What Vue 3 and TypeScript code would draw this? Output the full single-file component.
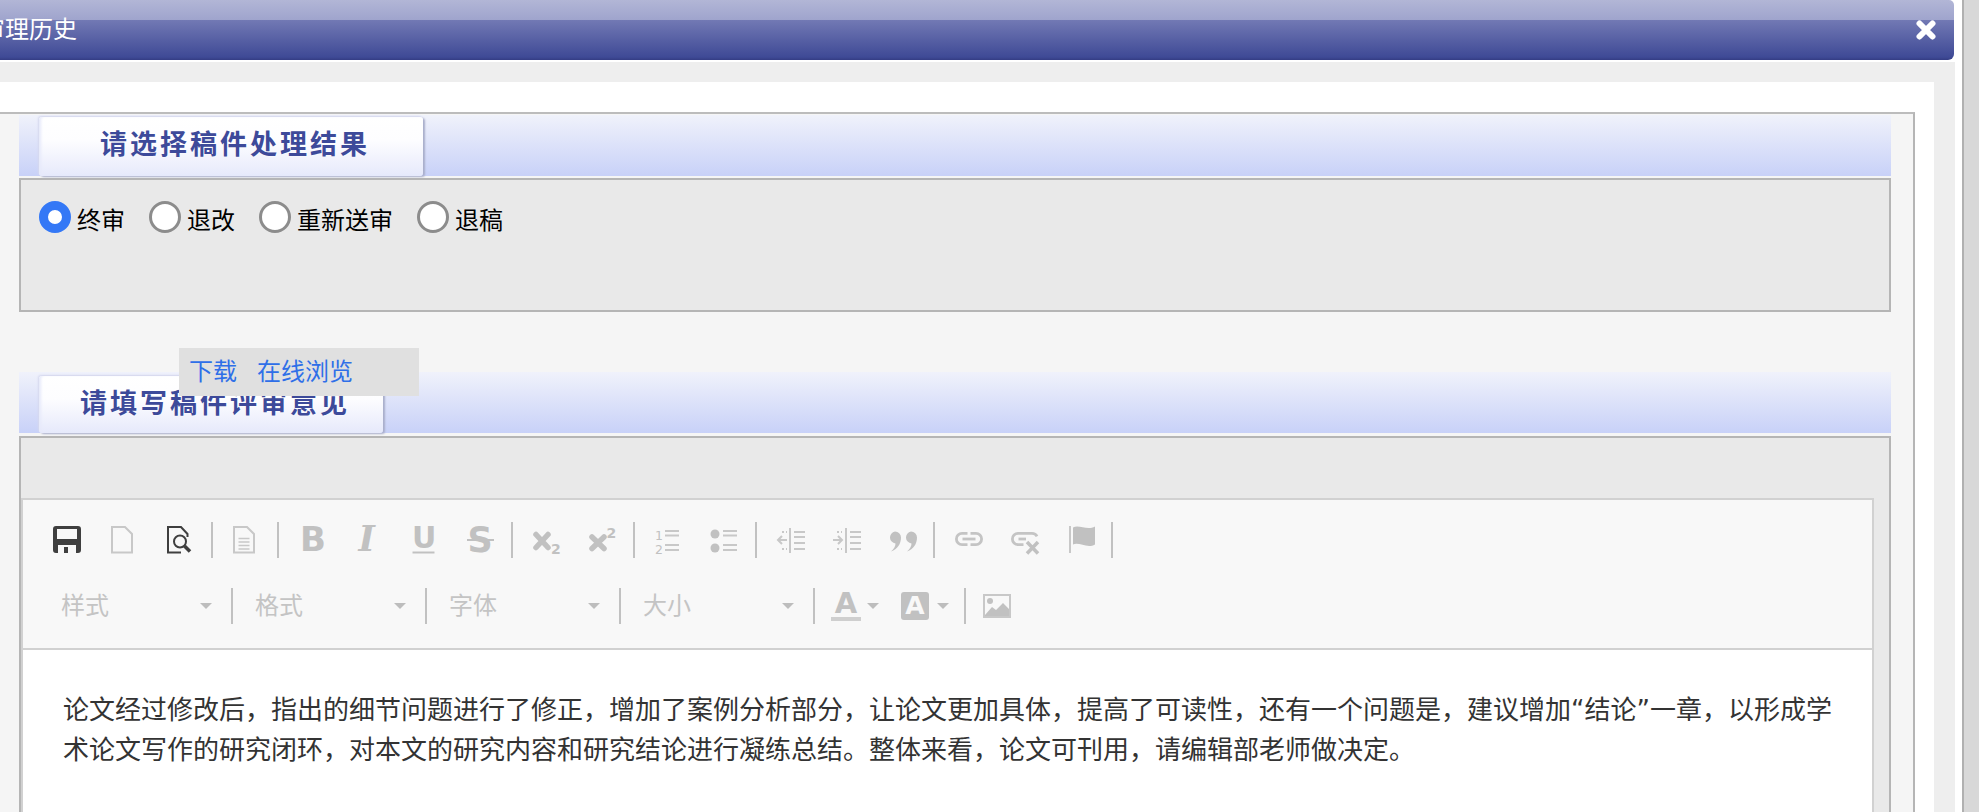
<script setup lang="ts">
const radios = [
  { label: '终审', checked: true },
  { label: '退改', checked: false },
  { label: '重新送审', checked: false },
  { label: '退稿', checked: false },
]
const combos = ['样式', '格式', '字体', '大小']
</script>

<template>
  <div class="page">
    <main class="dialog">
      <header class="titlebar">
        <span class="titlebar-text">审理历史</span>
        <svg class="close" viewBox="0 0 20 20" aria-label="关闭">
          <path d="M3.5 3.5 16.5 16.5M16.5 3.5 3.5 16.5" />
        </svg>
      </header>
      <div class="dialog-body">
        <div class="sheet">
          <div class="frame">
            <section class="section">
              <div class="section-head">
                <h2 class="tab tab-result">请选择稿件处理结果</h2>
              </div>
              <div class="panel panel-radio">
                <label v-for="r in radios" :key="r.label" class="radio">
                  <input type="radio" name="result" :checked="r.checked" />
                  <span>{{ r.label }}</span>
                </label>
              </div>
            </section>

            <section class="section section-review">
              <div class="popup">
                <a>下载</a>
                <a>在线浏览</a>
              </div>
              <div class="section-head">
                <h2 class="tab tab-review">请填写稿件评审意见</h2>
              </div>
              <div class="panel panel-editor">
                <div class="editor">
                  <div class="toolbar">
                    <div class="row row-top">
                      <div class="group">
                        <svg class="ico" viewBox="0 0 28 28"><path class="dark" fill-rule="evenodd" d="M3 0H25a3 3 0 0 1 3 3V24a3 3 0 0 1-3 3H3a3 3 0 0 1-3-3V3a3 3 0 0 1 3-3ZM4 3V13H24V3ZM5 19V27H11V21H15V27H23V19Z" /></svg>
                        <svg class="ico" viewBox="0 0 28 28"><path class="line" d="M3 1H16L23 8V26.5H3Z" /></svg>
                        <svg class="ico" viewBox="0 0 28 28">
                          <path class="line-dark" d="M16 26.5H3V1H16L22.500 8V11" />
                          <circle class="line-dark" cx="15" cy="15.500" r="6" />
                          <path class="line-dark thick" d="M19.500 20 25 25.500" />
                        </svg>
                      </div>
                      <i class="sep sep-a"></i>
                      <div class="group">
                        <svg class="ico" viewBox="0 0 28 28">
                          <path class="line" d="M1 1H14L21 8V26.500H1Z" />
                          <path class="line thin" d="M5.500 12.500H16.500M5.500 16H16.500M5.500 19.500H16.500M5.500 23H16.500" />
                        </svg>
                      </div>
                      <i class="sep sep-b"></i>
                      <div class="group">
                        <svg class="ico" viewBox="0 0 28 28"><text class="glyph" x="1" y="25" font-size="34" font-weight="700">B</text></svg>
                        <svg class="ico" viewBox="0 0 28 28"><text class="glyph serif" x="3.500" y="25" font-size="35" font-weight="700" font-style="italic">I</text></svg>
                        <svg class="ico" viewBox="0 0 28 28">
                          <text class="glyph" x="1" y="22" font-size="30" font-weight="700">U</text>
                          <rect class="solid" x="1.500" y="25.500" width="22" height="2" />
                        </svg>
                        <svg class="ico" viewBox="0 0 28 28">
                          <text class="glyph" x="0.500" y="25.500" font-size="35" font-weight="700">S</text>
                          <rect class="solid" x="0" y="13" width="27" height="2" />
                        </svg>
                      </div>
                      <i class="sep sep-b"></i>
                      <div class="group">
                        <svg class="ico" viewBox="0 0 28 28">
                          <path class="stroke-x" d="M3 8.500 15 21.500M15 8.500 3 21.500" />
                          <text class="glyph" x="18" y="28" font-size="14" font-weight="700">2</text>
                        </svg>
                        <svg class="ico" viewBox="0 0 28 28">
                          <path class="stroke-x" d="M3 11 15 22.500M15 11 3 22.500" />
                          <text class="glyph" x="17.500" y="12" font-size="14" font-weight="700">2</text>
                        </svg>
                      </div>
                      <i class="sep sep-b"></i>
                      <div class="group">
                        <svg class="ico" viewBox="0 0 28 28">
                          <text class="glyph" x="0" y="13.500" font-size="12.500">1</text>
                          <text class="glyph" x="0" y="27.500" font-size="12.500">2</text>
                          <path class="line" d="M10 5H24M10 9.500H24M10 19H24M10 24H24" />
                        </svg>
                        <svg class="ico" viewBox="0 0 28 28">
                          <circle class="solid" cx="4" cy="8" r="4.500" />
                          <circle class="solid" cx="4" cy="22" r="4.500" />
                          <path class="line" d="M12 5H26M12 9.500H26M12 19H26M12 24H26" />
                        </svg>
                      </div>
                      <i class="sep sep-b"></i>
                      <div class="group">
                        <svg class="ico" viewBox="0 0 28 28">
                          <path class="line" d="M13 2V27M17 6H28M17 11H28M17 17H28M17 23H28" />
                          <path class="line" d="M1 14H10M5 10 1 14 5 18" />
                          <path class="line dots" d="M5 6H10M5 23H10" />
                        </svg>
                        <svg class="ico" viewBox="0 0 28 28">
                          <path class="line" d="M13 2V27M17 6H28M17 11H28M17 17H28M17 23H28" />
                          <path class="line" d="M0 14H9M5 10 9 14 5 18" />
                          <path class="line dots" d="M4 6H9M4 23H9" />
                        </svg>
                        <svg class="ico" viewBox="0 0 28 28">
                          <path class="solid" d="M6 5.500a6 6 0 0 1 6 6C12 18 8.500 23 2 25.500 5 22.500 6.500 20 6.500 17.400A6 6 0 0 1 6 5.500Z" />
                          <path class="solid" d="M22 5.500a6 6 0 0 1 6 6C28 18 24.500 23 18 25.500 21 22.500 22.500 20 22.500 17.400A6 6 0 0 1 22 5.500Z" />
                        </svg>
                      </div>
                      <i class="sep sep-b"></i>
                      <div class="group">
                        <svg class="ico" viewBox="0 0 28 28">
                          <path class="line wide" d="M12.500 7.400H7a5.600 5.600 0 0 0 0 11.200H12.500M15.500 7.400H21a5.600 5.600 0 0 1 0 11.200H15.500" />
                          <path class="line wide" d="M7.500 13H20.500" />
                        </svg>
                        <svg class="ico" viewBox="0 0 28 28">
                          <path class="line wide" d="M12.500 18.600H7a5.600 5.600 0 0 1 0-11.200H21a5.600 5.600 0 0 1 5 3" />
                          <path class="line wide" d="M7.500 13H15" />
                          <path class="stroke-x small" d="M16 16 27 27.500M27 16 16 27.500" />
                        </svg>
                        <svg class="ico" viewBox="0 0 28 28">
                          <path class="line" d="M3 0V27" />
                          <path class="solid" d="M6 1.500C12-2 20 5 28 .5V18.500C20 23 12 15.500 6 18.500Z" />
                        </svg>
                      </div>
                      <i class="sep sep-b"></i>
                    </div>
                    <div class="row row-bottom">
                      <template v-for="(c, i) in combos" :key="c">
                        <div class="combo"><span>{{ c }}</span><b class="caret"></b></div>
                        <i class="sep" :class="i === 3 ? 'sep-last' : 'sep-c'"></i>
                      </template>
                      <div class="color-btn">
                        <span class="a-text">A</span>
                        <b class="caret"></b>
                      </div>
                      <div class="color-btn color-bg">
                        <span class="a-box">A</span>
                        <b class="caret"></b>
                      </div>
                      <i class="sep sep-d"></i>
                      <svg class="ico" viewBox="0 0 28 28">
                        <rect class="line" x="1" y="3" width="26" height="22" />
                        <circle class="solid" cx="7" cy="9" r="3" />
                        <path class="solid" d="M2 23 9 15 13 18 20 11 26 17V24H2Z" />
                      </svg>
                    </div>
                  </div>
                  <div class="editor-body">
                    <p>论文经过修改后，指出的细节问题进行了修正，增加了案例分析部分，让论文更加具体，提高了可读性，还有一个问题是，建议增加“结论”一章，以形成学术论文写作的研究闭环，对本文的研究内容和研究结论进行凝练总结。整体来看，论文可刊用，请编辑部老师做决定。</p>
                  </div>
                </div>
              </div>
            </section>
          </div>
        </div>
      </div>
    </main>
    <aside class="scroll-rail"></aside>
  </div>
</template>

<style scoped>
.page {
  display: flex;
  width: 1979px;
  height: 812px;
  overflow: hidden;
  background: #fff;
  font-family: "Noto Sans CJK SC", "Liberation Sans", sans-serif;
}
.dialog {
  width: 1955px;
  margin-right: 7px;
  flex: none;
  display: flex;
  flex-direction: column;
}
.scroll-rail {
  flex: 1;
  background: #d8d8d8;
  border-left: 2px solid #b0b0b0;
}
.titlebar {
  height: 60px;
  margin-right: 1px;
  margin-bottom: 2px;
  flex: none;
  display: flex;
  align-items: center;
  justify-content: space-between;
  padding-right: 18px;
  box-sizing: border-box;
  color: #fff;
  border-radius: 0 5px 6px 0;
  background: linear-gradient(#b2b6d6 0, #9fa4cd 20px, #7279b4 20px, #3f4a96 57px, #343d84 60px);
}
.titlebar-text {
  margin-left: -19px;
  padding-bottom: 5px;
  font-size: 24px;
  line-height: 1;
}
.close {
  width: 20px;
  height: 20px;
}
.close path {
  fill: none;
  stroke: #fff;
  stroke-width: 6;
  stroke-linecap: round;
}
.dialog-body {
  flex: 1;
  min-height: 0;
  background: #eee;
  padding: 20px 21px 0 0;
}
.sheet {
  height: 100%;
  box-sizing: border-box;
  background: #fff;
  padding: 30px 19px 0 0;
}
.frame {
  height: 100%;
  box-sizing: border-box;
  background: #f5f5f5;
  border-top: 2px solid #bcbcbc;
  border-right: 2px solid #b5b5b5;
  padding: 1px 22px 0 19px;
}
.section-review {
  margin-top: 60px;
  position: relative;
}
.section-head {
  height: 61px;
  background: linear-gradient(#f0f2fb, #c8d1f8);
  display: flex;
  align-items: flex-end;
  padding-left: 20px;
}
.tab {
  margin: 0;
  box-sizing: border-box;
  display: flex;
  align-items: center;
  font-size: 27px;
  letter-spacing: 3px;
  font-weight: 700;
  color: #3d4a9a;
  background: linear-gradient(#fff, #fdfdff 40%, #e6e9fb);
  border-radius: 3px;
  box-shadow: inset 3px 0 3px -1px #e6e9fa, 2px 1px 2px #a9aecb, -1px -1px 2px #d5d8ee;
  text-shadow: 0 0 2px #fff;
  white-space: nowrap;
}
.tab-result {
  width: 384px;
  height: 59px;
  padding: 0 0 8px 61px;
}
.tab-review {
  width: 344px;
  height: 57px;
  padding: 0 0 6px 41px;
}
.panel {
  margin-top: 2px;
  background: #e9e9e9;
  border: 2px solid #b5b5b5;
}
.panel-radio {
  height: 134px;
  box-sizing: border-box;
  display: flex;
  align-items: flex-start;
  gap: 24px;
  padding: 21px 0 0 18px;
}
.radio {
  display: flex;
  align-items: center;
  gap: 6px;
  height: 32px;
  font-size: 24px;
  color: #000;
}
.radio span {
  position: relative;
  top: 2px;
  line-height: 1;
}
.radio input {
  appearance: none;
  margin: 0;
  width: 32px;
  height: 32px;
  box-sizing: border-box;
  border-radius: 50%;
  background: #fff;
  border: 3px solid #8c8c8c;
}
.radio input:checked {
  border: 9px solid #3478f6;
}
.popup {
  position: absolute;
  left: 160px;
  top: -24px;
  z-index: 2;
  width: 240px;
  height: 48px;
  box-sizing: border-box;
  padding: 0 0 5px 10px;
  display: flex;
  align-items: center;
  gap: 20px;
  background: #e0e0e0;
  font-size: 24px;
  color: #2f6fe8;
}
.panel-editor {
  margin-top: 3px;
  padding: 60px 15px 0 0;
  height: 400px;
  box-sizing: border-box;
  border-bottom: 0;
  border-right-width: 2px;
}
.editor {
  border: 2px solid #d1d1d1;
  border-bottom: 0;
  background: #fff;
  height: 100%;
}
.toolbar {
  height: 150px;
  box-sizing: border-box;
  background: #f8f8f8;
  border-bottom: 2px solid #d1d1d1;
  padding-top: 22px;
}
.row {
  height: 36px;
  display: flex;
  align-items: center;
}
.row-top {
  padding-left: 30px;
}
.row-bottom {
  margin-top: 30px;
  padding-left: 38px;
}
.group {
  display: flex;
  gap: 28px;
  align-items: center;
}
.ico {
  width: 28px;
  height: 28px;
  flex: none;
  display: block;
  overflow: visible;
}
.dark { fill: #3f3f3f; }
.solid { fill: #c1c1c1; }
.line {
  fill: none;
  stroke: #c8c8c8;
  stroke-width: 2;
}
.line.thin { stroke-width: 1.6; }
.line.wide { stroke-width: 2.8; stroke: #c4c4c4; }
.line.dots { stroke-dasharray: 2 2; }
.line-dark {
  fill: none;
  stroke: #3f3f3f;
  stroke-width: 2;
}
.line-dark.thick { stroke-width: 3.5; }
.stroke-x {
  fill: none;
  stroke: #c1c1c1;
  stroke-width: 5.500;
  stroke-linecap: round;
}
.stroke-x.small { stroke-width: 3.5; stroke-linecap: butt; }
.glyph {
  fill: #c1c1c1;
  font-family: "DejaVu Sans", sans-serif;
}
.glyph.serif {
  font-family: "DejaVu Serif", serif;
}
.sep {
  display: block;
  flex: none;
  width: 2px;
  height: 36px;
  background: #c1c1c1;
}
.sep-a { margin: 0 20px 0 18px; }
.sep-b { margin: 0 20px 0 16px; }
.sep-c { margin: 0 22px 0 19px; }
.sep-last { margin: 0 16px 0 19px; }
.sep-d { margin: 0 17px 0 15px; }
.combo {
  width: 151px;
  flex: none;
  display: flex;
  align-items: center;
  justify-content: space-between;
  font-size: 24px;
  line-height: 1;
  color: #c4c4c4;
}
.combo span {
  position: relative;
  top: -2px;
}
.caret {
  display: block;
  flex: none;
  width: 0;
  height: 0;
  border-left: 6px solid transparent;
  border-right: 6px solid transparent;
  border-top: 6px solid #bdbdbd;
}
.color-btn {
  display: flex;
  align-items: center;
  gap: 6px;
  width: 70px;
  flex: none;
}
.a-text {
  display: block;
  width: 30px;
  height: 30px;
  box-sizing: border-box;
  border-bottom: 4px solid #cfcfcf;
  text-align: center;
  font: 700 29px/24px "DejaVu Sans", sans-serif;
  color: #c1c1c1;
}
.color-bg {
  width: 48px;
  gap: 8px;
}
.a-box {
  display: block;
  width: 28px;
  height: 28px;
  border-radius: 3px;
  background: #c1c1c1;
  color: #f8f8f8;
  text-align: center;
  font: 700 25px/28px "DejaVu Sans", sans-serif;
}
.editor-body {
  padding: 0 38px 0 40px;
  font-family: "DejaVu Sans", "Noto Sans CJK SC", sans-serif;
  font-size: 26px;
  line-height: 40px;
  color: #333;
}
.editor-body p {
  margin: 40px 0 0;
}
</style>

<style>
html, body { margin: 0; overflow: hidden; }
</style>
